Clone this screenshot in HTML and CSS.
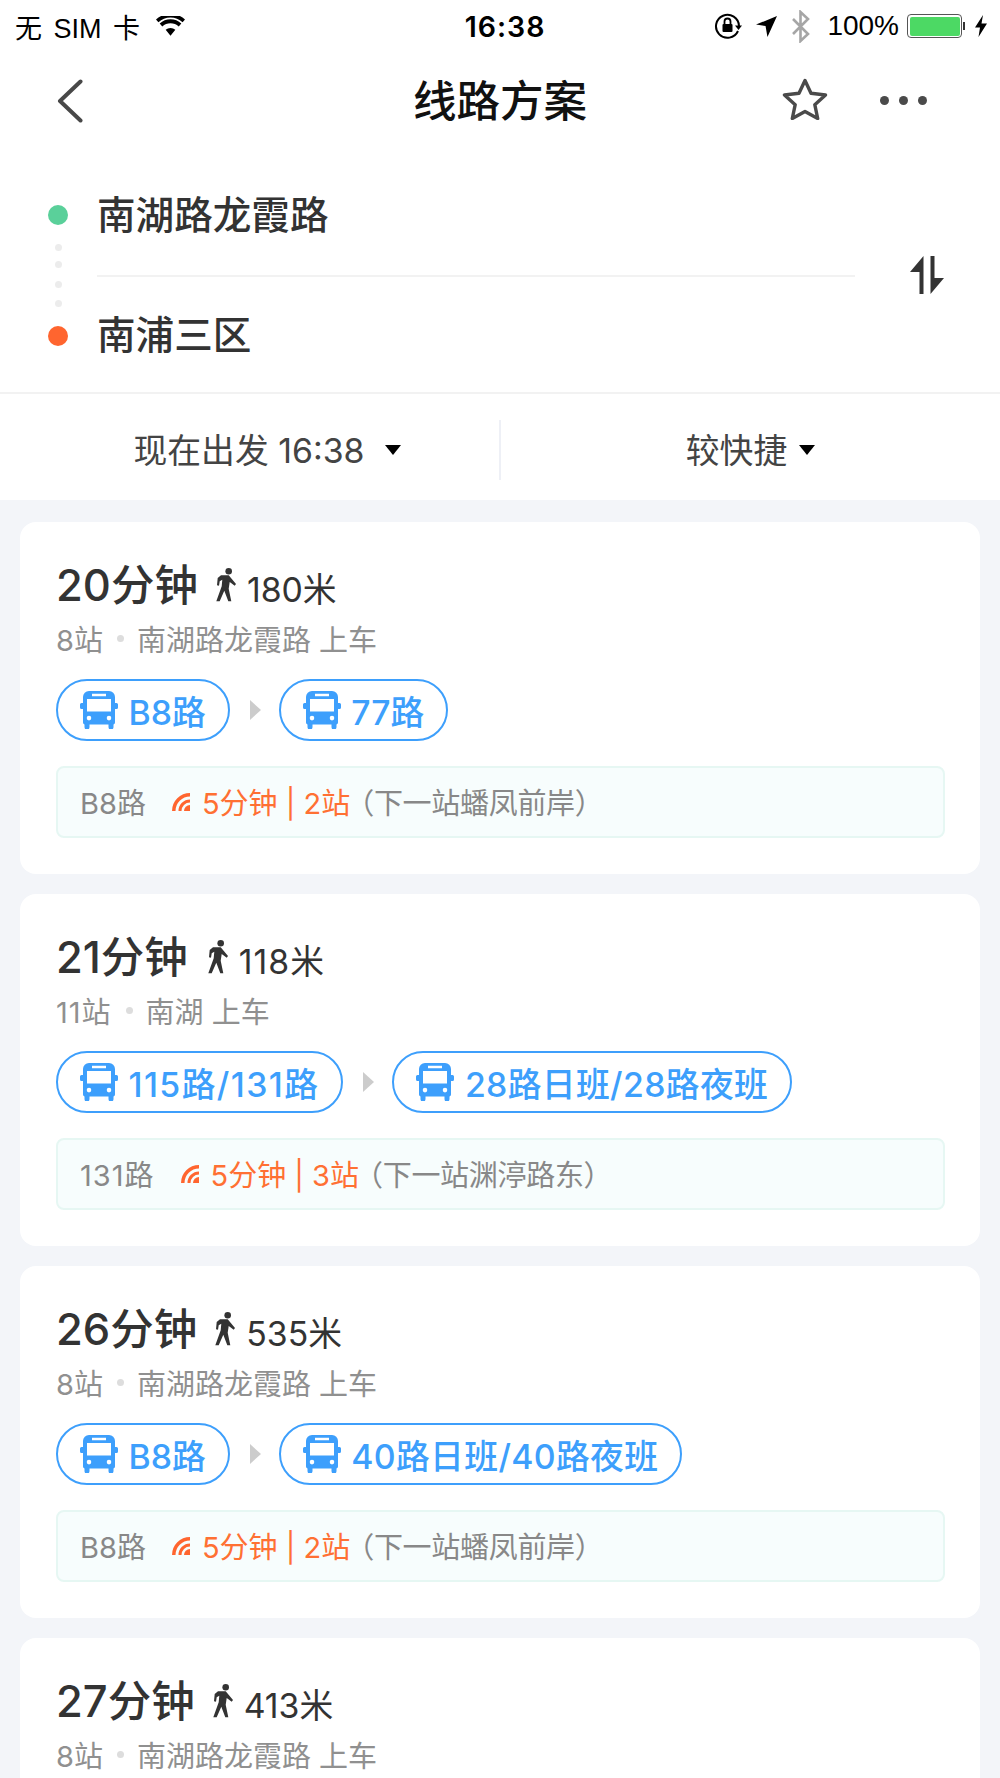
FILE: index.html
```html
<!DOCTYPE html>
<html lang="zh-CN">
<head>
<meta charset="utf-8">
<title>线路方案</title>
<link rel="stylesheet" href="styles.css">
</head>
<body>
<svg class="defs" width="0" height="0" aria-hidden="true">
  <symbol id="bus" viewBox="0 0 38 38">
    <path fill-rule="evenodd" d="M9 0h20a6 6 0 0 1 6 6v6h1.500A1.500 1.500 0 0 1 38 13.500v3a1.500 1.500 0 0 1-1.500 1.500H35v13.500a2 2 0 0 1-1.500 1.900V36a2.500 2.500 0 0 1-5 0v-2.500h-19V36a2.500 2.500 0 0 1-5 0v-2.600A2 2 0 0 1 3 31.500V18H1.500A1.500 1.500 0 0 1 0 16.500v-3A1.500 1.500 0 0 1 1.500 12H3V6a6 6 0 0 1 6-6zM7 8v12.500h24V8zM12 2.800v2.400h14V2.800zM9 24.800a2.300 2.300 0 1 0 0 4.600 2.300 2.300 0 0 0 0-4.600zm20 0a2.300 2.300 0 1 0 0 4.600 2.300 2.300 0 0 0 0-4.600z"/>
  </symbol>
  <symbol id="walk" viewBox="0 0 21 34">
    <circle cx="12.700" cy="3.300" r="3.300"/>
    <path d="M5 7.300h7.700L20 16l-1.300 1.700-5-3.700-1 6.700 2.600 12.600h-3l-4-10.600-4.600 10.600H.3L5.700 18.300l.6-6.600-2.600 1.600-.7 4.400-2-.4.700-7.300z"/>
  </symbol>
  <symbol id="signal" viewBox="0 0 18 18">
    <path d="M18 12v6h-6a6 6 0 0 1 6-6z"/>
    <path d="M18 6.500v3A8.500 8.500 0 0 0 9.500 18h-3A11.500 11.500 0 0 1 18 6.500z"/>
    <path d="M18 0v3.500A14.500 14.500 0 0 0 3.500 18H0A18 18 0 0 1 18 0z"/>
  </symbol>
</svg>
<div class="screen">
  <header class="top">
    <div class="status">
      <div class="status-left">
        <span class="carrier">无 SIM 卡</span>
        <svg class="wifi" viewBox="0 0 30 20"><path d="M15 20l-5-6a7.500 7.500 0 0 1 10 0zM6.500 10.500L3.800 7.500a16.500 16.500 0 0 1 22.400 0l-2.700 3a12.500 12.500 0 0 0-17 0zM2.500 6L0 3.300a22 22 0 0 1 30 0L27.500 6a18.500 18.500 0 0 0-25 0z"/></svg>
      </div>
      <div class="status-time">16:38</div>
      <div class="status-right">
        <svg class="lock" viewBox="0 0 28 28"><path fill="none" stroke="#000" stroke-width="2" d="M24 19a11.500 11.500 0 1 1 1-5"/><path d="M21 13.500h7L24.500 18z"/><rect x="8.500" y="12" width="10" height="8" rx="1"/><path fill="none" stroke="#000" stroke-width="1.800" d="M10.500 12V9.500a3 3 0 0 1 6 0V12"/></svg>
        <svg class="loc" viewBox="0 0 22 22"><path d="M22 0L12 22l-2-11.500L0 9z"/></svg>
        <svg class="bt" viewBox="0 0 20 33"><path fill="none" stroke="#a6a6a6" stroke-width="2.600" d="M2 9l15 15-7.500 7V2L17 9 2 24"/></svg>
        <span class="pct">100%</span>
        <div class="battery"><div class="battery-fill"></div></div>
        <span class="battery-tip"></span>
        <svg class="bolt" viewBox="0 0 12 22"><path d="M8 0L0 12.500h5L3.500 22 12 8.500H6.500z"/></svg>
      </div>
    </div>
    <nav class="nav">
      <svg class="back" viewBox="0 0 26 44"><path fill="none" stroke="#484848" stroke-width="4" stroke-linecap="round" stroke-linejoin="round" d="M23.500 2.500L3 22l20.500 19.500"/></svg>
      <h1 class="title">线路方案</h1>
      <div class="nav-actions">
        <svg class="star" viewBox="0 0 46 42"><path fill="none" stroke="#4a4a4a" stroke-width="3.400" stroke-linejoin="round" d="M23 2.500l6 12.800 14.500 1.700-10.700 9.700 2.900 13.800L23 33.500l-12.700 7 2.900-13.800L2.500 17 17 15.300z"/></svg>
        <div class="more"><i></i><i></i><i></i></div>
      </div>
    </nav>
  </header>

  <section class="route">
    <div class="route-dots">
      <span class="dot dot-start"></span>
      <span class="pip pip-a"></span><span class="pip pip-b"></span><span class="pip pip-c"></span><span class="pip pip-c"></span>
      <span class="dot dot-end"></span>
    </div>
    <div class="route-names">
      <div class="place">南湖路龙霞路</div>
      <div class="place place-end">南浦三区</div>
    </div>
    <svg class="swap" viewBox="0 0 34 38"><path fill="#333" d="M13.500 0v38h-4V16H0zM20.500 0h4v22H34L20.500 38z"/></svg>
  </section>

  <section class="filters">
    <div class="filter filter-time"><span>现在出发 16:38</span><i class="caret"></i></div>
    <div class="filter filter-alt"><span>较快捷</span><i class="caret"></i></div>
  </section>

  <main class="list">
    <article class="card">
      <div class="head"><span class="dur">20分钟</span><svg class="walk"><use href="#walk"/></svg><span class="dist">180米</span></div>
      <div class="sub"><span>8站</span><i class="sep"></i><span>南湖路龙霞路 上车</span></div>
      <div class="lines">
        <div class="pill"><svg class="bus"><use href="#bus"/></svg><span>B8路</span></div>
        <i class="next"></i>
        <div class="pill"><svg class="bus"><use href="#bus"/></svg><span>77路</span></div>
      </div>
      <div class="info"><span class="info-line">B8路</span><svg class="signal"><use href="#signal"/></svg><span class="eta">5分钟 | 2站</span><span class="stop">（下一站蟠凤前岸）</span></div>
    </article>

    <article class="card">
      <div class="head"><span class="dur">21分钟</span><svg class="walk walk-far"><use href="#walk"/></svg><span class="dist wide">118米</span></div>
      <div class="sub"><span class="wide">11站</span><i class="sep"></i><span>南湖 上车</span></div>
      <div class="lines">
        <div class="pill"><svg class="bus"><use href="#bus"/></svg><span class="wider">115路/131路</span></div>
        <i class="next"></i>
        <div class="pill"><svg class="bus"><use href="#bus"/></svg><span class="wide-s">28路日班/28路夜班</span></div>
      </div>
      <div class="info"><span class="info-line wide">131路</span><svg class="signal"><use href="#signal"/></svg><span class="eta">5分钟 | 3站</span><span class="stop">（下一站渊渟路东）</span></div>
    </article>

    <article class="card">
      <div class="head"><span class="dur">26分钟</span><svg class="walk"><use href="#walk"/></svg><span class="dist">535米</span></div>
      <div class="sub"><span>8站</span><i class="sep"></i><span>南湖路龙霞路 上车</span></div>
      <div class="lines">
        <div class="pill"><svg class="bus"><use href="#bus"/></svg><span>B8路</span></div>
        <i class="next"></i>
        <div class="pill"><svg class="bus"><use href="#bus"/></svg><span class="wide-s">40路日班/40路夜班</span></div>
      </div>
      <div class="info"><span class="info-line">B8路</span><svg class="signal"><use href="#signal"/></svg><span class="eta">5分钟 | 2站</span><span class="stop">（下一站蟠凤前岸）</span></div>
    </article>

    <article class="card">
      <div class="head"><span class="dur">27分钟</span><svg class="walk"><use href="#walk"/></svg><span class="dist">413米</span></div>
      <div class="sub"><span>8站</span><i class="sep"></i><span>南湖路龙霞路 上车</span></div>
    </article>
  </main>
</div>
</body>
</html>
```

FILE: styles.css
```css
* { box-sizing: border-box; }
html, body { margin: 0; padding: 0; }
body {
  width: 1000px;
  height: 1778px;
  overflow: hidden;
  background: #f3f5f9;
  font-family: Inter, "Noto Sans CJK SC", sans-serif;
  color: #333;
}
.defs { position: absolute; }
.screen { width: 1000px; height: 1778px; overflow: hidden; display: flex; flex-direction: column; }
.wide { letter-spacing: 1px; }
.wider { letter-spacing: 1.400px; }
.wide-s { letter-spacing: .35px; }

.top { background: #fff; height: 150px; flex: none; }
.status {
  height: 52px;
  padding: 0 13px 0 15px;
  display: grid;
  grid-template-columns: 1fr auto 1fr;
  align-items: center;
  color: #000;
  font-size: 27px;
  font-family: "Liberation Sans", "Noto Sans CJK SC", sans-serif;
}
.status-left { display: flex; align-items: center; gap: 16px; }
.carrier { word-spacing: 4px; }
.wifi { width: 29px; height: 20px; }
.status-time { font-size: 28.500px; letter-spacing: 1px; font-family: Inter, sans-serif; font-weight: 600; margin-left: 8px; }
.status-right { display: flex; align-items: center; justify-content: flex-end; }
.lock { width: 28px; height: 28px; margin-right: 14px; }
.loc { width: 21px; height: 21px; margin-right: 14px; }
.bt { width: 20px; height: 33px; margin-right: 16px; }
.pct { font-size: 28px; margin-right: 8px; }
.battery { width: 55px; height: 24px; border: 1.500px solid #555; border-radius: 4px; padding: 1.500px; }
.battery-fill { height: 100%; background: #4cd964; border-radius: 2px; }
.battery-tip { width: 2px; height: 8px; background: #333; margin-right: 10px; margin-left: 1px; }
.bolt { width: 12px; height: 22px; }

.nav { height: 98px; position: relative; display: flex; align-items: center; justify-content: center; }
.back { position: absolute; left: 57px; top: 27px; width: 26px; height: 44px; }
.title { margin: 0; font-size: 43.500px; line-height: 60px; font-weight: 500; color: #111; }
.nav-actions { position: absolute; right: 73px; top: 28px; display: flex; align-items: center; gap: 52px; }
.star { width: 46px; height: 42px; margin-top: -2px; }
.more { display: flex; gap: 10px; }
.more i { width: 9px; height: 9px; border-radius: 50%; background: #4a4a4a; }

.route { background: #fff; height: 244px; flex: none; display: flex; position: relative; padding-left: 48px; border-bottom: 2px solid #f2f2f2; }
.route-dots { width: 20px; display: flex; flex-direction: column; align-items: center; padding-top: 55px; margin-right: 29px; }
.dot { width: 20px; height: 20px; border-radius: 50%; flex: none; }
.dot-start { background: #5ad09a; }
.dot-end { background: #ff652f; margin-top: 19px; }
.pip { width: 7px; height: 7px; border-radius: 50%; background: #ececec; flex: none; }
.pip-a { margin-top: 19px; }
.pip-b { margin-top: 10px; }
.pip-c { margin-top: 12.500px; }
.route-names { width: 758px; }
.place { height: 127px; padding-top: 38px; font-size: 38.600px; line-height: 54px; font-weight: 500; color: #333; border-bottom: 2px solid #f2f2f2; }
.place-end { border-bottom: 0; height: auto; padding-top: 31px; }
.swap { position: absolute; left: 910px; top: 106px; width: 34px; height: 38px; }

.filters { background: #fff; height: 106px; flex: none; display: flex; align-items: center; padding-top: 6px; }
.filter { height: 60px; display: flex; align-items: center; justify-content: center; font-size: 33.800px; color: #444; }
.filter span { margin-bottom: 4px; }
.filter-time { flex: none; width: 501px; gap: 21px; border-right: 2px solid #eef0f6; padding-left: 36px; }
.filter-alt { flex: 1; gap: 12px; }
.caret { width: 0; height: 0; border-left: 8px solid transparent; border-right: 8px solid transparent; border-top: 10px solid #000; }

.list { flex: 1; min-height: 0; padding: 22px 20px 0; display: flex; flex-direction: column; gap: 20px; }
.card { flex: none; height: 352px; background: #fff; border-radius: 16px; padding: 34px 32px 0 36px; }
.head { height: 58px; display: flex; align-items: center; }
.dur { font-size: 43.500px; font-weight: 500; color: #333; line-height: 58px; }
.walk { width: 21px; height: 34px; margin-left: 18px; margin-right: 10px; fill: #333; }
.walk-far { margin-left: 20px; }
.dist { font-size: 33.800px; color: #333; line-height: 40px; padding-top: 10px; }
.sub { height: 38px; margin-top: 5px; display: flex; align-items: center; font-size: 29px; color: #909090; }
.sep { width: 7px; height: 7px; border-radius: 50%; background: #ddd; margin: 0 13px 0 14px; }
.lines { margin-top: 22px; display: flex; align-items: center; }
.pill { height: 62px; border: 2.500px solid #3d9ffc; border-radius: 31px; display: flex; align-items: center; padding: 0 22px 0 22px; color: #3d9ffc; font-size: 33.800px; font-weight: 500; gap: 10.500px; white-space: nowrap; }
.bus { width: 38px; height: 38px; fill: #3d9ffc; }
.next { width: 0; height: 0; margin: 0 18px 0 20px; border-top: 10px solid transparent; border-bottom: 10px solid transparent; border-left: 11px solid #ccc; }
.info { margin-top: 25px; height: 72px; border: 2px solid #e6f7f3; border-radius: 8px; background: #f7fdfd; display: flex; align-items: center; padding: 0 0 2px 22px; font-size: 29px; color: #888; width: 889px; }
.info-line { margin-right: 26px; }
.signal { width: 18px; height: 18px; fill: #ff652f; margin-right: 12px; margin-top: 2px; }
.eta { color: #ff7033; }
.stop { margin-left: -5px; letter-spacing: -.3px; }
```
